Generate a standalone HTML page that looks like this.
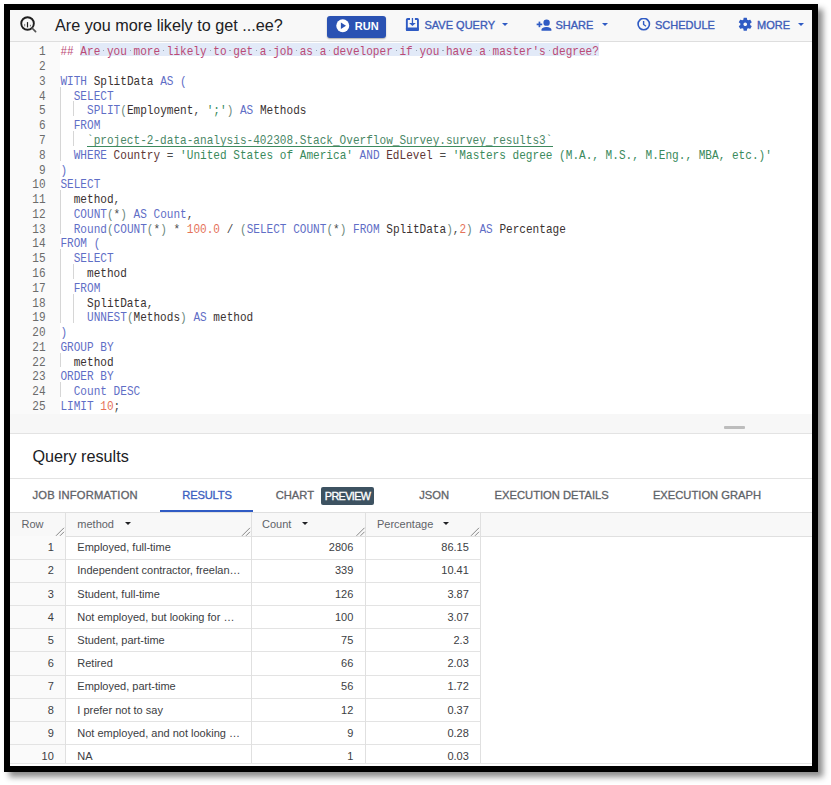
<!DOCTYPE html>
<html><head><meta charset="utf-8">
<style>
*{margin:0;padding:0;box-sizing:border-box}
html,body{width:831px;height:785px;background:#fff;overflow:hidden;position:relative;font-family:"Liberation Sans",sans-serif}
.frame{position:absolute;left:4px;top:4px;width:814px;height:768px;border:6px solid #000;box-shadow:5px 5px 6px rgba(0,0,0,0.45)}
.abs{position:absolute}
#hdr{position:absolute;left:10px;top:10px;width:802px;height:32px;background:#f8f8f8;border-bottom:1px solid #dedede}
.title{position:absolute;left:55px;top:14.5px;font-size:16.2px;line-height:20px;color:#202124;white-space:nowrap}
.tb{position:absolute;top:18.4px;font-size:11px;line-height:14px;color:#3d5cb8;white-space:nowrap;-webkit-text-stroke:0.35px currentColor}
.run{position:absolute;left:327px;top:15.5px;width:58.5px;height:22.3px;background:#2a52b3;border-radius:3px;box-shadow:0 1px 1.5px rgba(0,0,0,0.3)}
.ln{position:absolute;left:10px;width:35.6px;text-align:right;font-family:"Liberation Mono",monospace;font-size:11.085px;line-height:14.78px;height:14.78px;color:#6b6b6b;padding-top:2.6px;transform:scaleY(1.075);transform-origin:0 12.9px}
.cl{position:absolute;left:60.4px;font-family:"Liberation Mono",monospace;font-size:11.085px;line-height:14.78px;height:14.78px;white-space:pre;padding-top:2.6px;z-index:2;transform:scaleY(1.075);transform-origin:0 12.9px}
.gutter{position:absolute;left:10px;top:42px;width:50.3px;height:372px;background:#fafafa}
.gd{position:absolute;width:1px;background:#d6d6d6}
.sel{position:absolute;background:#e2eaf8;z-index:1}
.dot{position:absolute;width:1.3px;height:1.3px;background:#9aa8b8;z-index:2}
.ul{position:absolute;height:1px;background:#3d8a5e;z-index:2}
.k{color:#5f6ec6}.i{color:#3a3232}.c{color:#5e3636}.s{color:#3a8a5c}.n{color:#e5735a}.m{color:#bb4a76}.p{color:#4a4a4a}.b{color:#6d8a7e}.l{color:#4a8766}
#band{position:absolute;left:10px;top:414px;width:802px;height:20px;background:#f7f7f7;border-bottom:1px solid #e3e3e3}
.handle{position:absolute;left:724px;top:426px;width:21px;height:3px;background:#bdbdbd;border-radius:1px}
.qr{position:absolute;left:32.5px;top:446.3px;font-size:16.2px;line-height:20px;color:#202124;white-space:nowrap}
.tabline{position:absolute;left:10px;top:478px;width:802px;height:1px;background:#e3e3e3}
.tab{position:absolute;top:488.3px;font-size:11.2px;line-height:14px;color:#5f6368;white-space:nowrap;-webkit-text-stroke:0.3px currentColor}
.chip{position:absolute;left:321px;top:486.8px;width:53.2px;height:18px;background:#3d5261;border-radius:2px}
.chipt{position:absolute;left:324.8px;top:488.6px;letter-spacing:-0.6px;font-size:10.8px;line-height:14px;color:#fff;white-space:nowrap;-webkit-text-stroke:0.35px #fff}
.uline{position:absolute;left:160px;top:510px;width:93px;height:2px;background:#2f5bc4}
.thead{position:absolute;left:10px;top:512px;width:802px;height:24.5px;background:#f8f8f8;border-top:1px solid #e0e0e0;border-bottom:1px solid #e0e0e0}
.th{position:absolute;top:517px;font-size:11px;line-height:14px;color:#5f6368;white-space:nowrap}
.tri{position:absolute;width:0;height:0;border-left:3.5px solid transparent;border-right:3.5px solid transparent;border-top:3.5px solid #202124}
.vl{position:absolute;width:1px;background:#e0e0e0}
.hl{position:absolute;left:10px;width:471px;height:1px;background:#e3e3e3}
.td{position:absolute;font-size:11px;line-height:14px;color:#3c4043;white-space:nowrap}
.c0{left:10px;width:43.8px;text-align:right}
.c1{left:77.3px}
.c2{left:10px;width:343.3px;text-align:right}
.c3{left:10px;width:458.8px;text-align:right}
.rowbg{position:absolute;left:10px;top:536px;width:56px;height:228px;background:#fafafa}
</style></head><body>
<div id="hdr"></div>
<!-- logo -->
<svg class="abs" style="left:19px;top:16px" width="19" height="18" viewBox="0 0 19 18">
  <circle cx="8.55" cy="7.5" r="6.3" fill="none" stroke="#1f1f1f" stroke-width="1.9"/>
  <line x1="13" y1="12" x2="16.6" y2="15.6" stroke="#555" stroke-width="1.7" stroke-linecap="round"/>
  <rect x="5.1" y="7.9" width="1.1" height="2.5" fill="#888"/>
  <rect x="7.9" y="6.1" width="1.2" height="5.3" fill="#1f1f1f"/>
  <rect x="10.9" y="8.8" width="1.1" height="1.6" fill="#777"/>
</svg>
<div class="title">Are you more likely to get ...ee?</div>
<div class="run"></div>
<svg class="abs" style="left:336px;top:19px" width="13.5" height="13.5" viewBox="0 0 13.5 13.5">
  <circle cx="6.75" cy="6.75" r="6.5" fill="#fff"/>
  <path d="M4.9 3.4 L10 6.75 L4.9 10.1 Z" fill="#2a52b3"/>
</svg>
<div class="tb" style="left:354.8px;top:18.8px;color:#fff;font-size:11px;font-weight:bold;-webkit-text-stroke:0">RUN</div>
<!-- save icon -->
<svg class="abs" style="left:405px;top:17px" width="15" height="15" viewBox="0 0 15 15">
  <path d="M5 1.95 H2.6 A0.75 0.75 0 0 0 1.85 2.7 V12.3 A0.75 0.75 0 0 0 2.6 13.05 H12.2 A0.75 0.75 0 0 0 12.95 12.3 V2.7 A0.75 0.75 0 0 0 12.2 1.95 H9.9" fill="none" stroke="#2f5bc4" stroke-width="1.9"/>
  <rect x="0.9" y="10.4" width="13" height="3.6" rx="1" fill="#2f5bc4"/>
  <rect x="6.8" y="1" width="1.3" height="6" fill="#2f5bc4"/>
  <path d="M4.1 5.9 L10.8 5.9 L7.45 9 Z" fill="#2f5bc4"/>
</svg>
<div class="tb" style="left:424.5px">SAVE QUERY</div>
<div class="tri" style="left:501.5px;top:23px;border-top-color:#2f5bc4;border-left-width:3.3px;border-right-width:3.3px;border-top-width:3.3px"></div>
<!-- share icon -->
<svg class="abs" style="left:535.5px;top:18.5px" width="16" height="13" viewBox="0 0 16 13">
  <circle cx="10.6" cy="3.65" r="3.2" fill="#2f5bc4"/>
  <path d="M5.5 11.8 V10.6 C5.5 9 8.5 8.1 10.45 8.1 C12.4 8.1 15.4 9 15.4 10.6 V11.8 Z" fill="#2f5bc4"/>
  <rect x="0.65" y="4.55" width="5.6" height="1.7" fill="#2f5bc4"/>
  <rect x="2.6" y="2.6" width="1.7" height="5.6" fill="#2f5bc4"/>
</svg>
<div class="tb" style="left:555.5px">SHARE</div>
<div class="tri" style="left:601.5px;top:23px;border-top-color:#2f5bc4;border-left-width:3.3px;border-right-width:3.3px;border-top-width:3.3px"></div>
<!-- clock -->
<svg class="abs" style="left:636.5px;top:17.7px" width="14" height="13" viewBox="0 0 14 13">
  <circle cx="6.75" cy="6.1" r="5.7" fill="none" stroke="#2f5bc4" stroke-width="1.6"/>
  <path d="M6.6 3.0 V6.5 L9.0 8.2" fill="none" stroke="#2f5bc4" stroke-width="1.4"/>
</svg>
<div class="tb" style="left:655px">SCHEDULE</div>
<!-- gear -->
<svg class="abs" style="left:737px;top:16.3px" width="16.5" height="16.5" viewBox="0 0 24 24">
  <path fill="#2f5bc4" d="M19.14 12.94c.04-.3.06-.61.06-.94 0-.32-.02-.64-.07-.94l2.03-1.58a.49.49 0 0 0 .12-.61l-1.92-3.32a.488.488 0 0 0-.59-.22l-2.39.96c-.5-.38-1.03-.7-1.62-.94l-.36-2.54a.484.484 0 0 0-.48-.41h-3.84c-.24 0-.43.17-.47.41l-.36 2.54c-.59.24-1.13.57-1.62.94l-2.39-.96c-.22-.08-.47 0-.59.22L2.74 8.87c-.12.21-.08.47.12.61l2.03 1.58c-.05.3-.09.63-.09.94s.02.64.07.94l-2.03 1.58a.49.49 0 0 0-.12.61l1.92 3.32c.12.22.37.29.59.22l2.39-.96c.5.38 1.03.7 1.62.94l.36 2.54c.05.24.24.41.48.41h3.84c.24 0 .44-.17.47-.41l.36-2.54c.59-.24 1.13-.56 1.62-.94l2.39.96c.22.08.47 0 .59-.22l1.92-3.32c.12-.22.07-.47-.12-.61l-2.01-1.58zM12 14.7c-1.49 0-2.7-1.21-2.7-2.7s1.21-2.7 2.7-2.7 2.7 1.21 2.7 2.7-1.21 2.7-2.7 2.7z"/>
</svg>
<div class="tb" style="left:757px">MORE</div>
<div class="tri" style="left:797.5px;top:23px;border-top-color:#2f5bc4;border-left-width:3.3px;border-right-width:3.3px;border-top-width:3.3px"></div>

<div class="gutter"></div>
<div class="ln" style="top:42.30px">1</div>
<div class="cl" style="top:42.30px"><span class="m">## Are you more likely to get a job as a developer if you have a master&#x27;s degree?</span></div>
<div class="ln" style="top:57.08px">2</div>
<div class="ln" style="top:71.86px">3</div>
<div class="cl" style="top:71.86px"><span class="k">WITH</span><span class="p"> </span><span class="i">SplitData</span><span class="p"> </span><span class="k">AS</span><span class="p"> </span><span class="k">(</span></div>
<div class="ln" style="top:86.64px">4</div>
<div class="cl" style="top:86.64px"><span class="p">  </span><span class="k">SELECT</span></div>
<div class="ln" style="top:101.42px">5</div>
<div class="cl" style="top:101.42px"><span class="p">    </span><span class="k">SPLIT</span><span class="b">(</span><span class="i">Employment</span><span class="p">, </span><span class="s">&#x27;;&#x27;</span><span class="b">)</span><span class="p"> </span><span class="k">AS</span><span class="p"> </span><span class="i">Methods</span></div>
<div class="ln" style="top:116.20px">6</div>
<div class="cl" style="top:116.20px"><span class="p">  </span><span class="k">FROM</span></div>
<div class="ln" style="top:130.98px">7</div>
<div class="cl" style="top:130.98px"><span class="p">    </span><span class="l">`project-2-data-analysis-402308.Stack_Overflow_Survey.survey_results3`</span></div>
<div class="ln" style="top:145.76px">8</div>
<div class="cl" style="top:145.76px"><span class="p">  </span><span class="k">WHERE</span><span class="p"> </span><span class="c">Country</span><span class="p"> = </span><span class="s">&#x27;United States of America&#x27;</span><span class="p"> </span><span class="k">AND</span><span class="p"> </span><span class="c">EdLevel</span><span class="p"> = </span><span class="s">&#x27;Masters degree (M.A., M.S., M.Eng., MBA, etc.)&#x27;</span></div>
<div class="ln" style="top:160.54px">9</div>
<div class="cl" style="top:160.54px"><span class="k">)</span></div>
<div class="ln" style="top:175.32px">10</div>
<div class="cl" style="top:175.32px"><span class="k">SELECT</span></div>
<div class="ln" style="top:190.10px">11</div>
<div class="cl" style="top:190.10px"><span class="p">  </span><span class="i">method</span><span class="p">,</span></div>
<div class="ln" style="top:204.88px">12</div>
<div class="cl" style="top:204.88px"><span class="p">  </span><span class="k">COUNT</span><span class="b">(</span><span class="p">*</span><span class="b">)</span><span class="p"> </span><span class="k">AS</span><span class="p"> </span><span class="k">Count</span><span class="p">,</span></div>
<div class="ln" style="top:219.66px">13</div>
<div class="cl" style="top:219.66px"><span class="p">  </span><span class="k">Round</span><span class="b">(</span><span class="k">COUNT</span><span class="b">(</span><span class="p">*</span><span class="b">)</span><span class="p"> * </span><span class="n">100.0</span><span class="p"> / </span><span class="b">(</span><span class="k">SELECT</span><span class="p"> </span><span class="k">COUNT</span><span class="b">(</span><span class="p">*</span><span class="b">)</span><span class="p"> </span><span class="k">FROM</span><span class="p"> </span><span class="i">SplitData</span><span class="b">)</span><span class="p">,</span><span class="n">2</span><span class="b">)</span><span class="p"> </span><span class="k">AS</span><span class="p"> </span><span class="i">Percentage</span></div>
<div class="ln" style="top:234.44px">14</div>
<div class="cl" style="top:234.44px"><span class="k">FROM</span><span class="p"> </span><span class="k">(</span></div>
<div class="ln" style="top:249.22px">15</div>
<div class="cl" style="top:249.22px"><span class="p">  </span><span class="k">SELECT</span></div>
<div class="ln" style="top:264.00px">16</div>
<div class="cl" style="top:264.00px"><span class="p">    </span><span class="i">method</span></div>
<div class="ln" style="top:278.78px">17</div>
<div class="cl" style="top:278.78px"><span class="p">  </span><span class="k">FROM</span></div>
<div class="ln" style="top:293.56px">18</div>
<div class="cl" style="top:293.56px"><span class="p">    </span><span class="i">SplitData</span><span class="p">,</span></div>
<div class="ln" style="top:308.34px">19</div>
<div class="cl" style="top:308.34px"><span class="p">    </span><span class="k">UNNEST</span><span class="b">(</span><span class="i">Methods</span><span class="b">)</span><span class="p"> </span><span class="k">AS</span><span class="p"> </span><span class="i">method</span></div>
<div class="ln" style="top:323.12px">20</div>
<div class="cl" style="top:323.12px"><span class="k">)</span></div>
<div class="ln" style="top:337.90px">21</div>
<div class="cl" style="top:337.90px"><span class="k">GROUP BY</span></div>
<div class="ln" style="top:352.68px">22</div>
<div class="cl" style="top:352.68px"><span class="p">  </span><span class="i">method</span></div>
<div class="ln" style="top:367.46px">23</div>
<div class="cl" style="top:367.46px"><span class="k">ORDER BY</span></div>
<div class="ln" style="top:382.24px">24</div>
<div class="cl" style="top:382.24px"><span class="p">  </span><span class="k">Count</span><span class="p"> </span><span class="k">DESC</span></div>
<div class="ln" style="top:397.02px">25</div>
<div class="cl" style="top:397.02px"><span class="k">LIMIT</span><span class="p"> </span><span class="n">10</span><span class="p">;</span></div>
<div class="gd" style="left:60.1px;top:86.64px;height:14.78px"></div>
<div class="gd" style="left:60.1px;top:101.42px;height:14.78px"></div>
<div class="gd" style="left:60.1px;top:116.20px;height:14.78px"></div>
<div class="gd" style="left:60.1px;top:130.98px;height:14.78px"></div>
<div class="gd" style="left:60.1px;top:145.76px;height:14.78px"></div>
<div class="gd" style="left:60.1px;top:190.10px;height:14.78px"></div>
<div class="gd" style="left:60.1px;top:204.88px;height:14.78px"></div>
<div class="gd" style="left:60.1px;top:219.66px;height:14.78px"></div>
<div class="gd" style="left:60.1px;top:249.22px;height:14.78px"></div>
<div class="gd" style="left:60.1px;top:264.00px;height:14.78px"></div>
<div class="gd" style="left:60.1px;top:278.78px;height:14.78px"></div>
<div class="gd" style="left:60.1px;top:293.56px;height:14.78px"></div>
<div class="gd" style="left:60.1px;top:308.34px;height:14.78px"></div>
<div class="gd" style="left:60.1px;top:352.68px;height:14.78px"></div>
<div class="gd" style="left:60.1px;top:382.24px;height:14.78px"></div>
<div class="gd" style="left:73.4px;top:101.42px;height:14.78px"></div>
<div class="gd" style="left:73.4px;top:130.98px;height:14.78px"></div>
<div class="gd" style="left:73.4px;top:264.00px;height:14.78px"></div>
<div class="gd" style="left:73.4px;top:293.56px;height:14.78px"></div>
<div class="gd" style="left:73.4px;top:308.34px;height:14.78px"></div>
<div class="sel" style="left:80.4px;top:42.9px;width:518.9px;height:13.6px"></div>
<div class="dot" style="left:103.0px;top:49.9px"></div>
<div class="dot" style="left:129.6px;top:49.9px"></div>
<div class="dot" style="left:162.9px;top:49.9px"></div>
<div class="dot" style="left:209.5px;top:49.9px"></div>
<div class="dot" style="left:229.4px;top:49.9px"></div>
<div class="dot" style="left:256.0px;top:49.9px"></div>
<div class="dot" style="left:269.3px;top:49.9px"></div>
<div class="dot" style="left:295.9px;top:49.9px"></div>
<div class="dot" style="left:315.9px;top:49.9px"></div>
<div class="dot" style="left:329.2px;top:49.9px"></div>
<div class="dot" style="left:395.7px;top:49.9px"></div>
<div class="dot" style="left:415.7px;top:49.9px"></div>
<div class="dot" style="left:442.3px;top:49.9px"></div>
<div class="dot" style="left:475.6px;top:49.9px"></div>
<div class="dot" style="left:488.9px;top:49.9px"></div>
<div class="dot" style="left:548.7px;top:49.9px"></div>
<div class="ul" style="left:87.0px;top:146px;width:465.6px"></div>

<div id="band"></div>
<div class="handle"></div>
<div class="qr">Query results</div>
<div class="tabline"></div>
<div class="tab" style="left:32.5px;letter-spacing:0.2px">JOB INFORMATION</div>
<div class="tab" style="left:182.3px;color:#3b5ec0;letter-spacing:-0.2px">RESULTS</div>
<div class="tab" style="left:275.7px">CHART</div>
<div class="chip"></div>
<div class="chipt">PREVIEW</div>
<div class="tab" style="left:419.2px">JSON</div>
<div class="tab" style="left:494.6px">EXECUTION DETAILS</div>
<div class="tab" style="left:652.9px">EXECUTION GRAPH</div>
<div class="uline"></div>

<div class="thead"></div>
<div class="rowbg"></div>
<div class="th" style="left:21.5px">Row</div>
<div class="th" style="left:77.3px">method</div>
<div class="tri" style="left:125.3px;top:522px"></div>
<div class="th" style="left:262px">Count</div>
<div class="tri" style="left:301.8px;top:522px"></div>
<div class="th" style="left:377px">Percentage</div>
<div class="tri" style="left:443px;top:522px"></div>
<div class="hl" style="top:558.55px"></div>
<div class="td c0" style="top:540.20px">1</div><div class="td c1" style="top:540.20px">Employed, full-time</div><div class="td c2" style="top:540.20px">2806</div><div class="td c3" style="top:540.20px">86.15</div>
<div class="hl" style="top:581.74px"></div>
<div class="td c0" style="top:563.39px">2</div><div class="td c1" style="top:563.39px">Independent contractor, freelan…</div><div class="td c2" style="top:563.39px">339</div><div class="td c3" style="top:563.39px">10.41</div>
<div class="hl" style="top:604.93px"></div>
<div class="td c0" style="top:586.58px">3</div><div class="td c1" style="top:586.58px">Student, full-time</div><div class="td c2" style="top:586.58px">126</div><div class="td c3" style="top:586.58px">3.87</div>
<div class="hl" style="top:628.12px"></div>
<div class="td c0" style="top:609.77px">4</div><div class="td c1" style="top:609.77px">Not employed, but looking for …</div><div class="td c2" style="top:609.77px">100</div><div class="td c3" style="top:609.77px">3.07</div>
<div class="hl" style="top:651.31px"></div>
<div class="td c0" style="top:632.96px">5</div><div class="td c1" style="top:632.96px">Student, part-time</div><div class="td c2" style="top:632.96px">75</div><div class="td c3" style="top:632.96px">2.3</div>
<div class="hl" style="top:674.50px"></div>
<div class="td c0" style="top:656.15px">6</div><div class="td c1" style="top:656.15px">Retired</div><div class="td c2" style="top:656.15px">66</div><div class="td c3" style="top:656.15px">2.03</div>
<div class="hl" style="top:697.69px"></div>
<div class="td c0" style="top:679.34px">7</div><div class="td c1" style="top:679.34px">Employed, part-time</div><div class="td c2" style="top:679.34px">56</div><div class="td c3" style="top:679.34px">1.72</div>
<div class="hl" style="top:720.88px"></div>
<div class="td c0" style="top:702.53px">8</div><div class="td c1" style="top:702.53px">I prefer not to say</div><div class="td c2" style="top:702.53px">12</div><div class="td c3" style="top:702.53px">0.37</div>
<div class="hl" style="top:744.07px"></div>
<div class="td c0" style="top:725.72px">9</div><div class="td c1" style="top:725.72px">Not employed, and not looking …</div><div class="td c2" style="top:725.72px">9</div><div class="td c3" style="top:725.72px">0.28</div>
<div class="td c0" style="top:748.91px">10</div><div class="td c1" style="top:748.91px">NA</div><div class="td c2" style="top:748.91px">1</div><div class="td c3" style="top:748.91px">0.03</div>
<div class="vl" style="left:65px;top:513px;height:251px"></div>
<div class="vl" style="left:250.8px;top:513px;height:251px"></div>
<div class="vl" style="left:365px;top:513px;height:251px"></div>
<div class="vl" style="left:479.7px;top:513px;height:251px"></div>
<div class="hl" style="top:763px;width:802px;background:#e6e6e6"></div>
<!-- resize handles -->
<svg class="abs" style="left:0;top:0" width="831" height="785">
  <g stroke="#7a7a7a" stroke-width="0.9">
    <line x1="56" y1="535.8" x2="64" y2="527.8"/><line x1="60" y1="535.8" x2="64" y2="531.8"/>
    <line x1="242" y1="535.8" x2="250" y2="527.8"/><line x1="246" y1="535.8" x2="250" y2="531.8"/>
    <line x1="356.5" y1="535.8" x2="364.5" y2="527.8"/><line x1="360.5" y1="535.8" x2="364.5" y2="531.8"/>
    <line x1="471" y1="535.8" x2="479" y2="527.8"/><line x1="475" y1="535.8" x2="479" y2="531.8"/>
  </g>
</svg>

<div class="frame"></div>
</body></html>
